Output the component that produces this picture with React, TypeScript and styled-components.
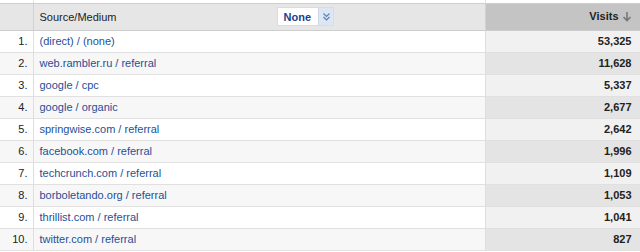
import styled, { createGlobalStyle } from "styled-components";

const GlobalStyle = createGlobalStyle`
  html, body { margin: 0; padding: 0; background: #fff; }
  body { font-family: "Liberation Sans", Arial, sans-serif; }
`;

const rows = [
  { source: "(direct) / (none)", visits: "53,325" },
  { source: "web.rambler.ru / referral", visits: "11,628" },
  { source: "google / cpc", visits: "5,337" },
  { source: "google / organic", visits: "2,677" },
  { source: "springwise.com / referral", visits: "2,642" },
  { source: "facebook.com / referral", visits: "1,996" },
  { source: "techcrunch.com / referral", visits: "1,109" },
  { source: "borboletando.org / referral", visits: "1,053" },
  { source: "thrillist.com / referral", visits: "1,041" },
  { source: "twitter.com / referral", visits: "827" },
];

const Table = styled.table`
  width: 640px;
  border-collapse: collapse;
  table-layout: fixed;
  font-size: 11px;
  color: #333;
`;

const Stub = styled.tr`
  height: 3px;
  td {
    padding: 0;
    border-right: 1px solid #e2e2e2;
    border-bottom: 1px solid #cfcfcf;
  }
`;

const HeadCell = styled.th<{ $dark?: boolean; $align?: string }>`
  height: 26px;
  padding: 0 8px 0 6px;
  background: ${(p) => (p.$dark ? "#c4c4c4" : "#e6e6e6")};
  border-right: 1px solid ${(p) => (p.$dark ? "#b8b8b8" : "#d2d2d2")};
  border-bottom: 1px solid #cdcdcd;
  text-align: ${(p) => p.$align || "left"};
  font-weight: ${(p) => (p.$dark ? "bold" : "normal")};
  color: #222;
  vertical-align: middle;
`;

const HeadInner = styled.div`
  display: flex;
  align-items: center;
`;

const Picker = styled.div`
  display: flex;
  align-items: stretch;
  height: 17px;
  margin-left: 160px;
  border: 1px solid #dcdcdc;
  background: #fff;
`;

const PickerLabel = styled.span`
  display: flex;
  align-items: center;
  padding: 0 7px 0 6px;
  font-weight: bold;
  color: #1c3f8c;
`;

const PickerButton = styled.span`
  display: flex;
  align-items: center;
  justify-content: center;
  width: 14px;
  background: #dde6f3;
  border-left: 1px solid #d0d8e6;
`;

const SortArrow = styled.span`
  display: inline-block;
  margin-left: 3px;
  vertical-align: -2px;
`;

const Row = styled.tr<{ $odd: boolean }>`
  height: 22px;
  td {
    border-bottom: 1px solid #e0e0e0;
    border-right: 1px solid #dedede;
    padding: 0 8px 0 6px;
    background: ${(p) => (p.$odd ? "#fff" : "#f7f7f7")};
  }
`;

const IndexCell = styled.td`
  text-align: right;
  color: #222;
  && { padding: 0 5px 0 0; }
`;

const LinkCell = styled.td`
  color: #1f4f98;
  white-space: nowrap;
`;

const VisitsCell = styled.td<{ $odd: boolean }>`
  text-align: right;
  font-weight: bold;
  color: #222;
  && {
    background: ${(p) => (p.$odd ? "#f1f1f1" : "#e4e4e4")};
    border-left: 1px solid #d4d4d4;
  }
`;

const ChevronIcon = () => (
  <svg width="9" height="10" viewBox="0 0 9 10">
    <path d="M1.5 1.5 L4.5 4.5 L7.5 1.5" fill="none" stroke="#5b7fb8" strokeWidth="1.2" />
    <path d="M1.5 5 L4.5 8 L7.5 5" fill="none" stroke="#5b7fb8" strokeWidth="1.2" />
  </svg>
);

const ArrowIcon = () => (
  <svg width="10" height="11" viewBox="0 0 10 11">
    <path d="M5 1 V9.5 M1.5 6 L5 9.5 L8.5 6" fill="none" stroke="#777" strokeWidth="1.6" />
  </svg>
);

export default function App() {
  return (
    <>
      <GlobalStyle />
      <Table>
        <colgroup>
          <col style={{ width: 33 }} />
          <col style={{ width: 452 }} />
          <col style={{ width: 155 }} />
        </colgroup>
        <tbody>
          <Stub>
            <td />
            <td />
            <td />
          </Stub>
          <tr>
            <HeadCell />
            <HeadCell>
              <HeadInner>
                <span>Source/Medium</span>
                <Picker>
                  <PickerLabel>None</PickerLabel>
                  <PickerButton>
                    <ChevronIcon />
                  </PickerButton>
                </Picker>
              </HeadInner>
            </HeadCell>
            <HeadCell $dark $align="right">
              Visits
              <SortArrow>
                <ArrowIcon />
              </SortArrow>
            </HeadCell>
          </tr>
          {rows.map((r, i) => (
            <Row key={r.source} $odd={i % 2 === 0}>
              <IndexCell>{i + 1}.</IndexCell>
              <LinkCell>{r.source}</LinkCell>
              <VisitsCell $odd={i % 2 === 0}>{r.visits}</VisitsCell>
            </Row>
          ))}
        </tbody>
      </Table>
    </>
  );
}
